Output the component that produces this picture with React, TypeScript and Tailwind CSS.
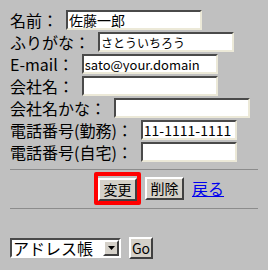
const JP = "font-['Noto_Sans_CJK_JP',sans-serif]";

const fields = [
  { label: "名前：", value: "佐藤一郎", w: "w-[136px]", text: "text-[14px]" },
  { label: "ふりがな：", value: "さとういちろう", w: "w-[136px]", text: "text-[12px]" },
  { label: "E-mail：", value: "sato@your.domain", w: "w-[136px]", text: "text-[13px]" },
  { label: "会社名：", value: "", w: "w-[136px]", text: "text-[13px]" },
  { label: "会社名かな：", value: "", w: "w-[136px]", text: "text-[13px]" },
  { label: "電話番号(勤務)：", value: "11-1111-1111", w: "w-[96px]", text: "text-[14px]" },
  { label: "電話番号(自宅)：", value: "", w: "w-[96px]", text: "text-[13px]" },
];

function Field({ label, value, w, text }: (typeof fields)[number]) {
  return (
    <div className="flex h-[22px] items-center">
      <span className="text-[16px] leading-none text-black">{label}</span>
      <input
        readOnly
        value={value}
        className={`ml-2 h-[20px] ${w} ${text} border-2 border-[#ece9d8] border-t-[#4a4a4a] border-l-[#4a4a4a] bg-white px-[1px] leading-none text-black outline-none`}
      />
    </div>
  );
}

function WinButton({ children, className = "" }: { children: React.ReactNode; className?: string }) {
  return (
    <button
      className={`border-2 border-[#fff] border-r-[#404040] border-b-[#404040] bg-[#d4d0c8] text-[14px] leading-none text-black ${className}`}
    >
      {children}
    </button>
  );
}

export default function App() {
  return (
    <div className={`${JP} h-[270px] w-[268px] bg-[#c0c0c0] px-[10px] pt-[9px]`}>
      <form className="flex flex-col">
        {fields.map((f) => (
          <Field key={f.label} {...f} />
        ))}
      </form>

      <hr className="mt-[6px] border-t border-[#8c8c8c]" />

      <div className="mt-[2px] flex items-center pl-[84px]">
        <span className="rounded-[2px] border-[4px] border-[#f00]">
          <WinButton className="h-[23px] w-[39px]">変更</WinButton>
        </span>
        <WinButton className="ml-[4px] h-[23px] w-[39px]">削除</WinButton>
        <a href="#" className="ml-[8px] text-[16px] leading-none text-[#0000ee] underline">
          戻る
        </a>
      </div>

      <hr className="mt-[3px] border-t border-[#8c8c8c]" />

      <div className="mt-[28px] flex items-center">
        <div className="flex h-[20px] w-[111px] items-center border-2 border-[#fff] border-t-[#4a4a4a] border-l-[#4a4a4a] bg-white">
          <span className="flex-1 pl-[1px] text-[16px] leading-none text-black">アドレス帳</span>
          <span className="flex h-[16px] w-[16px] items-center justify-center border-2 border-[#fff] border-r-[#404040] border-b-[#404040] bg-[#d4d0c8]">
            <svg width="7" height="4" viewBox="0 0 7 4">
              <path d="M0 0h7L3.5 4z" fill="#000" />
            </svg>
          </span>
        </div>
        <WinButton className="ml-[8px] h-[22px] w-[24px] text-[14px]">Go</WinButton>
      </div>
    </div>
  );
}
